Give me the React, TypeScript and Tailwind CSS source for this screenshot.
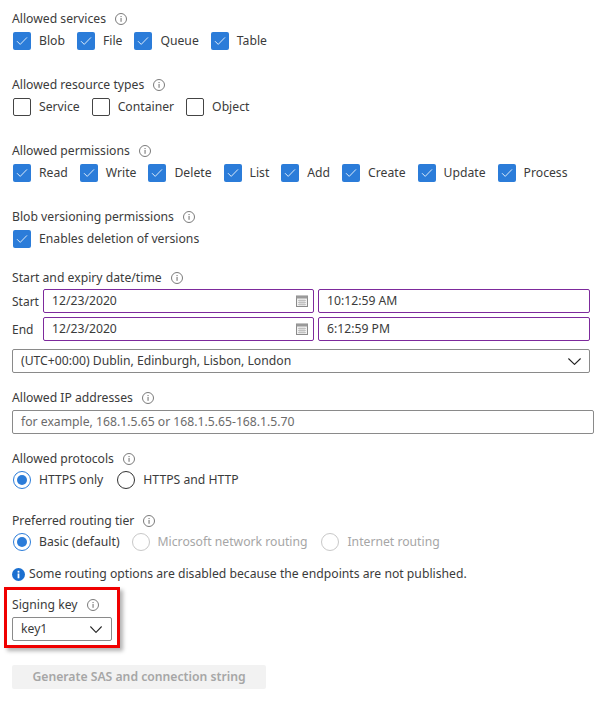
import { ReactNode } from "react";

function Info() {
  return (
    <svg width="12" height="12" viewBox="0 0 12 12" fill="none" className="shrink-0">
      <circle cx="6" cy="6" r="5.5" stroke="#7a7a7a" strokeWidth="1" />
      <rect x="5.5" y="5" width="1.1" height="3.8" fill="#7a7a7a" />
      <rect x="5.5" y="3" width="1.1" height="1.1" fill="#7a7a7a" />
    </svg>
  );
}

function Label({ text }: { text: string }) {
  return (
    <div className="flex h-[18px] items-center gap-[9px] text-[#3b3b3b]">
      <span>{text}</span>
      <Info />
    </div>
  );
}

function Check({ label, checked = false }: { label: string; checked?: boolean }) {
  return (
    <div className="flex items-center gap-2">
      {checked ? (
        <span className="flex h-[18px] w-[18px] items-center justify-center rounded-[2px] bg-[#2b7cd9]">
          <svg width="12" height="10" viewBox="0 0 12 10" fill="none">
            <path d="M1 5.2 L4.2 8.4 L11 1.4" stroke="#dcebfa" strokeWidth="1" />
          </svg>
        </span>
      ) : (
        <span className="h-[18px] w-[18px] rounded-[2px] border border-[#444444] bg-white" />
      )}
      <span className="text-[#3b3b3b]">{label}</span>
    </div>
  );
}

function Radio({
  label,
  state,
  className = "",
}: {
  label: string;
  state: "on" | "off" | "disabled";
  className?: string;
}) {
  const ring =
    state === "on" ? "border-[#2b7cd9]" : state === "off" ? "border-[#333333]" : "border-[#c8c8c8]";
  return (
    <div className={`flex items-center gap-2 ${className}`}>
      <span className={`flex h-[18px] w-[18px] items-center justify-center rounded-full border ${ring}`}>
        {state === "on" && <span className="h-[10px] w-[10px] rounded-full bg-[#2b7cd9]" />}
      </span>
      <span className={state === "disabled" ? "text-[#a6a6a6]" : "text-[#3b3b3b]"}>{label}</span>
    </div>
  );
}

function Chevron({ w = 13 }: { w?: number }) {
  return (
    <svg width={w} height="7" viewBox="0 0 13 7" fill="none" preserveAspectRatio="none">
      <path d="M0.4 0.5 L6.5 6.4 L12.6 0.5" stroke="#222222" strokeWidth="1.1" />
    </svg>
  );
}

function Calendar() {
  return (
    <svg width="12" height="12" viewBox="0 0 12 12" fill="none">
      <rect x="0.5" y="1" width="11" height="10.5" fill="#f0f0f0" stroke="#8a8a8a" />
      <rect x="0.5" y="1" width="11" height="2.5" fill="#9a9a9a" />
      <path d="M2 5.5 H10 M2 7.5 H10 M2 9.5 H10 M4 4.5 V10.5 M6 4.5 V10.5 M8 4.5 V10.5" stroke="#b5b5b5" strokeWidth="0.7" />
    </svg>
  );
}

function Box({ children, className = "" }: { children: ReactNode; className?: string }) {
  return (
    <div className={`flex h-6 items-center rounded-[2px] border px-2 ${className}`}>{children}</div>
  );
}

function DateRow({ name, time }: { name: string; time: string }) {
  return (
    <div className="flex items-center">
      <span className="w-[31px] pt-px text-[12px] text-[#3b3b3b]">{name}</span>
      <Box className="w-[271px] justify-between border-[#7d2a9c] pr-[5px]">
        <span className="text-[#3b3b3b]">12/23/2020</span>
        <Calendar />
      </Box>
      <Box className="ml-1 w-[272px] border-[#7d2a9c]">
        <span className="text-[#3b3b3b]">{time}</span>
      </Box>
    </div>
  );
}

export default function App() {
  return (
    <div className="h-[701px] w-[604px] overflow-hidden bg-white pl-3 pt-[10px] font-['Noto_Sans','Open_Sans',sans-serif] text-[12.2px] leading-[18px]">
      <Label text="Allowed services" />
      <div className="ml-px mt-1 flex gap-3">
        <Check checked label="Blob" />
        <Check checked label="File" />
        <Check checked label="Queue" />
        <Check checked label="Table" />
      </div>

      <div className="mt-[26px]">
        <Label text="Allowed resource types" />
        <div className="ml-px mt-1 flex gap-3">
          <Check label="Service" />
          <Check label="Container" />
          <Check label="Object" />
        </div>
      </div>

      <div className="mt-[26px]">
        <Label text="Allowed permissions" />
        <div className="ml-px mt-1 flex gap-3">
          {["Read", "Write", "Delete", "List", "Add", "Create", "Update", "Process"].map((p) => (
            <Check key={p} checked label={p} />
          ))}
        </div>
      </div>

      <div className="mt-[26px]">
        <Label text="Blob versioning permissions" />
        <div className="ml-px mt-1">
          <Check checked label="Enables deletion of versions" />
        </div>
      </div>

      <div className="mt-[21px]">
        <Label text="Start and expiry date/time" />
        <div className="mt-0.5 flex flex-col gap-1">
          <DateRow name="Start" time="10:12:59 AM" />
          <DateRow name="End" time="6:12:59 PM" />
        </div>
        <Box className="mt-2 w-[578px] justify-between border-[#8a8a8a]">
          <span className="text-[#3b3b3b]">(UTC+00:00) Dublin, Edinburgh, Lisbon, London</span>
          <Chevron />
        </Box>
      </div>

      <div className="mt-4">
        <Label text="Allowed IP addresses" />
        <Box className="mt-[3px] w-[582px] border-[#8a8a8a]">
          <span className="text-[#6b6b6b]">for example, 168.1.5.65 or 168.1.5.65-168.1.5.70</span>
        </Box>
      </div>

      <div className="mt-4">
        <Label text="Allowed protocols" />
        <div className="ml-px mt-[3px] flex gap-3">
          <Radio state="on" label="HTTPS only" />
          <Radio state="off" label="HTTPS and HTTP" className="ml-0.5" />
        </div>
      </div>

      <div className="mt-[23px]">
        <Label text="Preferred routing tier" />
        <div className="ml-px mt-[3px] flex gap-3">
          <Radio state="on" label="Basic (default)" />
          <Radio state="disabled" label="Microsoft network routing" />
          <Radio state="disabled" label="Internet routing" className="ml-0.5" />
        </div>
      </div>

      <div className="mt-[14px] flex items-center gap-1 text-[#3b3b3b]">
        <svg width="13" height="13" viewBox="0 0 13 13" className="shrink-0">
          <circle cx="6.5" cy="6.5" r="6.5" fill="#1a6fd0" />
          <rect x="5.6" y="5.5" width="1.8" height="4.8" fill="#fff" />
          <rect x="5.6" y="2.8" width="1.8" height="1.8" fill="#fff" />
        </svg>
        <span>Some routing options are disabled because the endpoints are not published.</span>
      </div>

      <div className="-ml-2 mt-1 w-[116px] border-[3px] border-[#f00000] pb-1 pl-[5px] pt-1.5 shadow-[3px_3px_4px_rgba(0,0,0,0.3)]">
        <Label text="Signing key" />
        <Box className="mt-[3px] w-[100px] justify-between border-[#8a8a8a] pr-[9px]">
          <span className="text-[#3b3b3b]">key1</span>
          <Chevron w={12} />
        </Box>
      </div>

      <div className="mt-[17px] flex h-6 w-[254px] items-center justify-center rounded-[2px] bg-[#f2f2f2] font-semibold text-[#a6a6a6]">
        Generate SAS and connection string
      </div>
    </div>
  );
}
